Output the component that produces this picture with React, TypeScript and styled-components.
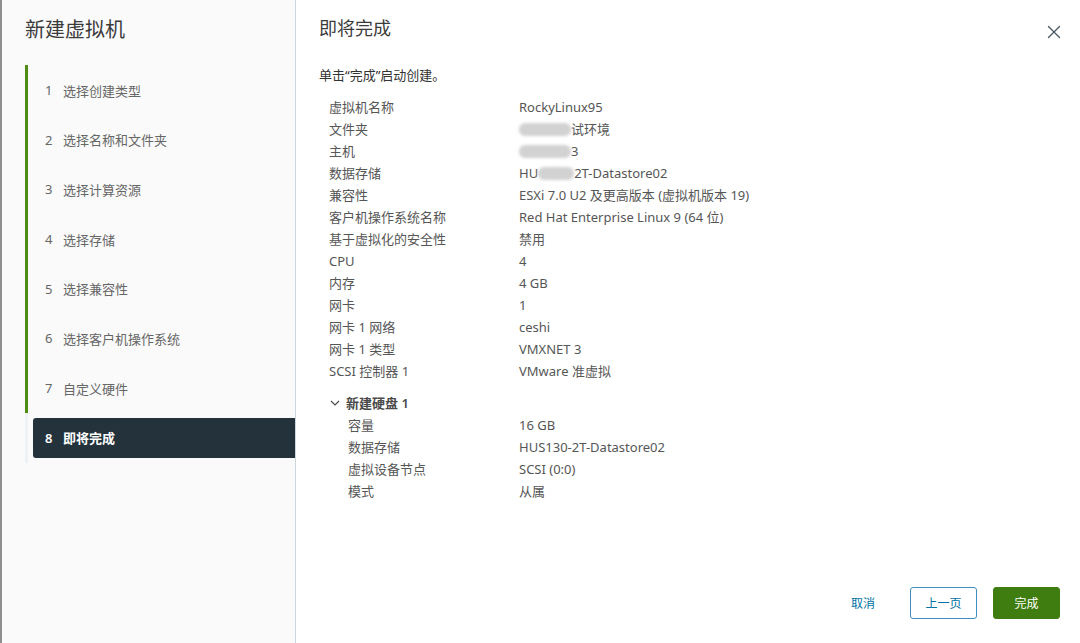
import styled, { createGlobalStyle } from "styled-components";

const GlobalStyle = createGlobalStyle`
    html, body {
        margin: 0;
        padding: 0;
        background: #ffffff;
    }
    body {
        font-family: "Noto Sans", "Noto Sans CJK SC", sans-serif;
        color: #565656;
    }
`;

const Frame = styled.div`
    display: flex;
    width: 1080px;
    height: 643px;
    box-sizing: border-box;
    border-left: 2px solid #8e8e8e;
    overflow: hidden;
`;

const Sidebar = styled.div`
    width: 293px;
    flex-shrink: 0;
    background: #fafafa;
    border-right: 1px solid #cdd6db;
    padding-top: 16px;
`;

const WizardTitle = styled.h1`
    margin: 0 0 21px 23px;
    font-size: 20px;
    font-weight: 400;
    line-height: 28px;
    color: #3b3b3b;
`;

const StepList = styled.div`
    display: flex;
    flex-direction: column;
    margin-left: 23px;
`;

const Step = styled.div<{ $done: boolean }>`
    border-left: 3px solid ${(p) => (p.$done ? "#4f8c14" : "#edf2f5")};
    padding: 5px 0 4.7px 5px;
`;

const StepButton = styled.div<{ $active: boolean }>`
    display: flex;
    align-items: center;
    height: 40px;
    padding-left: 12px;
    font-size: 13px;
    border-radius: 3px 0 0 3px;
    background: ${(p) => (p.$active ? "#23323b" : "transparent")};
    color: ${(p) => (p.$active ? "#ffffff" : "#666666")};
    font-weight: ${(p) => (p.$active ? 600 : 400)};
`;

const StepNum = styled.span`
    width: 18px;
`;

const Main = styled.div`
    flex: 1;
    display: flex;
    flex-direction: column;
    padding: 16px 20px 24px 23px;
`;

const Header = styled.div`
    display: flex;
    justify-content: space-between;
    align-items: flex-start;
`;

const PageTitle = styled.h2`
    margin: 0;
    font-size: 18px;
    font-weight: 400;
    line-height: 24px;
    color: #3b3b3b;
`;

const CloseButton = styled.div`
    margin-top: 9px;
    margin-right: -1px;
    width: 14px;
    height: 14px;
    display: flex;
    color: #4d5a63;
`;

const Content = styled.div`
    flex: 1;
`;

const Intro = styled.p`
    margin: 25px 0 11px 0;
    font-size: 13px;
    line-height: 20px;
    color: #333333;
`;

const Table = styled.div`
    padding-left: 10px;
`;

const Row = styled.div<{ $indent?: boolean }>`
    display: grid;
    grid-template-columns: ${(p) => (p.$indent ? "171px" : "190px")} 1fr;
    padding-left: ${(p) => (p.$indent ? "19px" : "0")};
    font-size: 13px;
    line-height: 22px;
    color: #565656;
`;

const Value = styled.span`
    display: flex;
    align-items: center;
`;

const Blur = styled.span<{ $w: number }>`
    display: inline-block;
    width: ${(p) => p.$w}px;
    height: 13px;
    border-radius: 6px;
    background: #d2d2d2;
    filter: blur(1.5px);
`;

const SectionHead = styled.div`
    display: flex;
    align-items: center;
    gap: 5px;
    margin-top: 10px;
    font-size: 13px;
    line-height: 22px;
    font-weight: 600;
    color: #4a4a4a;
`;

const Footer = styled.div`
    display: flex;
    justify-content: flex-end;
    align-items: center;
    gap: 16px;
`;

const Button = styled.button<{ $kind: "link" | "outline" | "primary" }>`
    height: 32px;
    min-width: ${(p) => (p.$kind === "link" ? "0" : "67px")};
    padding: 0 ${(p) => (p.$kind === "link" ? "18px" : "12px")};
    border-radius: 3px;
    font-family: "Noto Sans", "Noto Sans CJK SC", sans-serif;
    font-size: 12px;
    cursor: pointer;
    border: 1px solid
        ${(p) =>
            p.$kind === "outline" ? "#3e8ec0" : p.$kind === "primary" ? "#3f7d10" : "transparent"};
    background: ${(p) => (p.$kind === "primary" ? "#3f7d10" : "transparent")};
    color: ${(p) => (p.$kind === "primary" ? "#ffffff" : "#0072a3")};
`;

const steps = [
    "选择创建类型",
    "选择名称和文件夹",
    "选择计算资源",
    "选择存储",
    "选择兼容性",
    "选择客户机操作系统",
    "自定义硬件",
    "即将完成",
];

const rows: [string, React.ReactNode][] = [
    ["虚拟机名称", "RockyLinux95"],
    ["文件夹", <><Blur $w={52} />试环境</>],
    ["主机", <><Blur $w={52} />3</>],
    ["数据存储", <>HU<Blur $w={36} />2T-Datastore02</>],
    ["兼容性", "ESXi 7.0 U2 及更高版本 (虚拟机版本 19)"],
    ["客户机操作系统名称", "Red Hat Enterprise Linux 9 (64 位)"],
    ["基于虚拟化的安全性", "禁用"],
    ["CPU", "4"],
    ["内存", "4 GB"],
    ["网卡", "1"],
    ["网卡 1 网络", "ceshi"],
    ["网卡 1 类型", "VMXNET 3"],
    ["SCSI 控制器 1", "VMware 准虚拟"],
];

const diskRows: [string, string][] = [
    ["容量", "16 GB"],
    ["数据存储", "HUS130-2T-Datastore02"],
    ["虚拟设备节点", "SCSI (0:0)"],
    ["模式", "从属"],
];

export default function App() {
    return (
        <>
            <GlobalStyle />
            <Frame>
                <Sidebar>
                    <WizardTitle>新建虚拟机</WizardTitle>
                    <StepList>
                        {steps.map((s, i) => (
                            <Step key={s} $done={i < steps.length - 1}>
                                <StepButton $active={i === steps.length - 1}>
                                    <StepNum>{i + 1}</StepNum>
                                    {s}
                                </StepButton>
                            </Step>
                        ))}
                    </StepList>
                </Sidebar>
                <Main>
                    <Header>
                        <PageTitle>即将完成</PageTitle>
                        <CloseButton>
                            <svg viewBox="0 0 14 14" width="14" height="14">
                                <path d="M1.5 1.5 L12.5 12.5 M12.5 1.5 L1.5 12.5" stroke="currentColor" strokeWidth="1.4" strokeLinecap="round" />
                            </svg>
                        </CloseButton>
                    </Header>
                    <Content>
                        <Intro>单击“完成”启动创建。</Intro>
                        <Table>
                            {rows.map(([k, v]) => (
                                <Row key={k}>
                                    <span>{k}</span>
                                    <Value>{v}</Value>
                                </Row>
                            ))}
                            <SectionHead>
                                <svg viewBox="0 0 12 12" width="12" height="12">
                                    <path d="M2 4 L6 8 L10 4" fill="none" stroke="#4a4a4a" strokeWidth="1.2" />
                                </svg>
                                新建硬盘 1
                            </SectionHead>
                            {diskRows.map(([k, v]) => (
                                <Row key={k} $indent>
                                    <span>{k}</span>
                                    <Value>{v}</Value>
                                </Row>
                            ))}
                        </Table>
                    </Content>
                    <Footer>
                        <Button $kind="link">取消</Button>
                        <Button $kind="outline">上一页</Button>
                        <Button $kind="primary">完成</Button>
                    </Footer>
                </Main>
            </Frame>
        </>
    );
}
